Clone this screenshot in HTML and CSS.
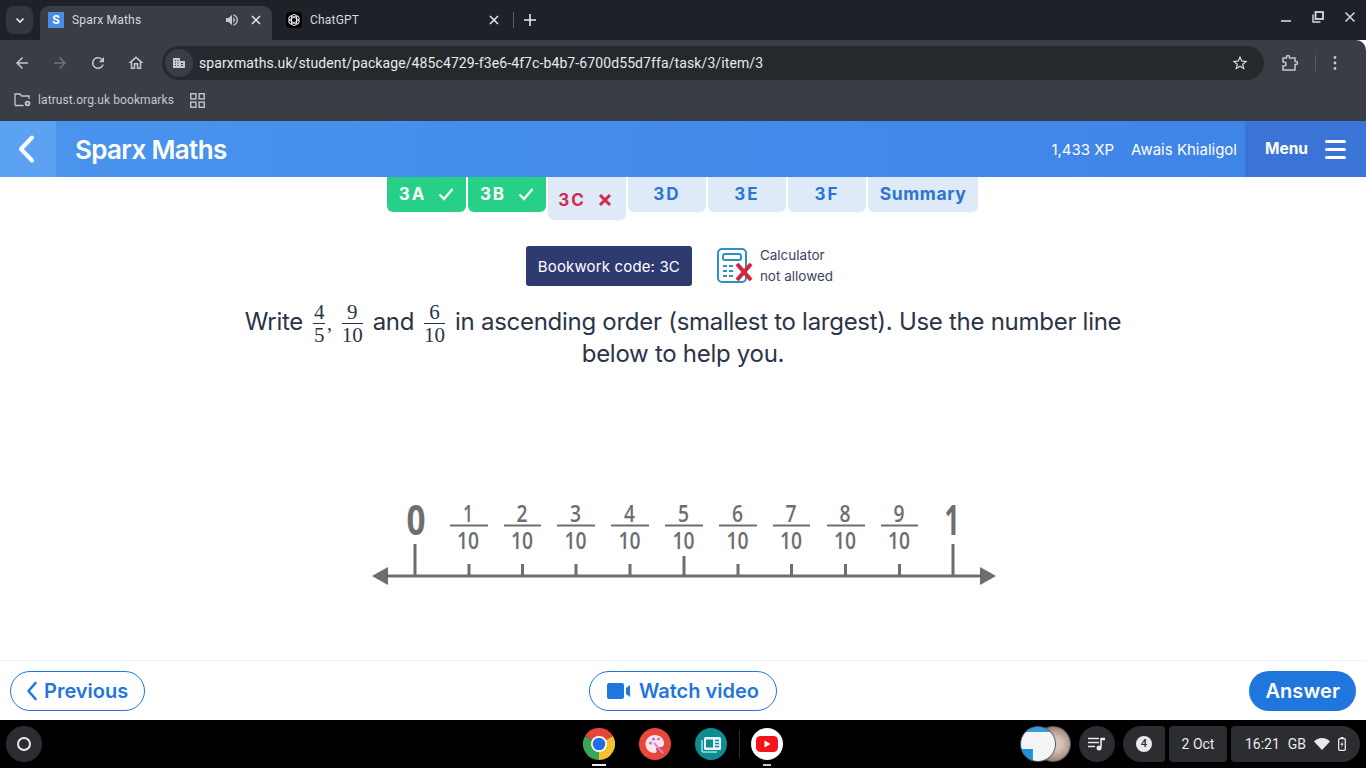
FILE: index.html
```html
<!DOCTYPE html>
<html lang="en">
  <head>
    <meta charset="UTF-8" />
    <meta name="viewport" content="width=device-width, initial-scale=1.0" />
    <title>Sparx Maths</title>
    <link rel="stylesheet" href="styles.css">
  </head>
  <body>
    <!-- Browser Tabs -->
    <div class="tab-strip">
      <div class="tab-search">
        <svg viewBox="0 0 12 12" width="12" height="12"><path d="M2.5 4.5L6 8l3.5-3.5" fill="none" stroke="#e8eaed" stroke-width="1.7"/></svg>
      </div>
      <div class="tab tab-active">
        <span class="tab-favicon">S</span>
        <span class="tab-title">Sparx Maths</span>
        <svg class="tab-sound" viewBox="0 0 24 24" width="16" height="16"><path d="M3 9v6h4l5 5V4L7 9H3zm11 -1.030v8.050c1.480-.73 2.500-2.250 2.500-4.020S15.480 8.700 14 7.970zM14 3.230v2.060c2.890.86 5 3.540 5 6.710s-2.110 5.850-5 6.710v2.060c4.010-.91 7-4.490 7-8.770s-2.990-7.860-7-8.770z" fill="#c4c7cc"/></svg>
        <svg class="tab-close" viewBox="0 0 10 10" width="10" height="10"><path d="M1 1l8 8M9 1l-8 8" stroke="#e8eaed" stroke-width="1.5"/></svg>
      </div>
      <div class="tab tab-other">
        <span class="gpt-favicon">
          <svg viewBox="0 0 16 16" width="16" height="16">
            <g fill="none" stroke="#e8eaed" stroke-width="1">
              <rect x="5.5" y="2.5" width="5" height="11" rx="2.5"/>
              <rect x="5.5" y="2.5" width="5" height="11" rx="2.5" transform="rotate(60 8 8)"/>
              <rect x="5.5" y="2.5" width="5" height="11" rx="2.5" transform="rotate(120 8 8)"/>
            </g>
          </svg>
        </span>
        <span class="tab-title">ChatGPT</span>
        <svg class="tab-close" viewBox="0 0 10 10" width="10" height="10"><path d="M1 1l8 8M9 1l-8 8" stroke="#e8eaed" stroke-width="1.5"/></svg>
      </div>
      <div class="tab-sep"></div>
      <svg class="tab-new" viewBox="0 0 12 12" width="12" height="12"><path d="M6 0v12M0 6h12" stroke="#e8eaed" stroke-width="1.6"/></svg>
      <div class="window-controls">
        <svg viewBox="0 0 12 12" width="12" height="12"><path d="M1 10h10" stroke="#d5d8de" stroke-width="1.6"/></svg>
        <svg viewBox="0 0 12 12" width="12" height="12"><path d="M1 3.500v7.500h7.500" fill="none" stroke="#d5d8de" stroke-width="1.4"/><rect x="3.500" y="1" width="7.500" height="7" fill="none" stroke="#d5d8de" stroke-width="1.8"/></svg>
        <svg viewBox="0 0 12 12" width="12" height="12"><path d="M1.500 1.500l9 9M10.500 1.500l-9 9" stroke="#d5d8de" stroke-width="1.5"/></svg>
      </div>
    </div>

    <!-- Toolbar -->
    <div class="toolbar">
      <div class="nav-icons">
        <svg viewBox="0 0 24 24" width="18" height="18"><path d="M20 11H7.830l5.590-5.590L12 4l-8 8 8 8 1.410-1.410L7.830 13H20z" fill="#c4c7cc"/></svg>
        <svg viewBox="0 0 24 24" width="18" height="18"><path d="M12 4l-1.410 1.410L16.170 11H4v2h12.170l-5.580 5.590L12 20l8-8z" fill="#6f7278"/></svg>
        <svg viewBox="0 0 24 24" width="18" height="18"><path d="M17.650 6.350A7.958 7.958 0 0 0 12 4c-4.420 0-7.990 3.580-7.990 8s3.570 8 7.990 8c3.730 0 6.840-2.550 7.730-6h-2.080A5.990 5.990 0 0 1 12 18c-3.310 0-6-2.690-6-6s2.690-6 6-6c1.660 0 3.140.69 4.220 1.780L13 11h7V4l-2.350 2.350z" fill="#c4c7cc"/></svg>
        <svg viewBox="0 0 24 24" width="18" height="18"><path d="M12 5.690l5 4.500V18h-2v-6H9v6H7v-7.810l5-4.500M12 3L2 12h3v8h6v-6h2v6h6v-8h3L12 3z" fill="#c4c7cc"/></svg>
      </div>
      <div class="omnibox">
        <span class="site-icon">
          <svg viewBox="0 0 14 14" width="14" height="14"><path d="M1 2h7v3h5v7H1z" fill="#c4c7cc"/><path d="M3 4h1v1H3zM5.500 4h1v1h-1zM3 6.500h1v1H3zM5.500 6.500h1v1h-1zM3 9h1v1H3zM5.500 9h1v1h-1zM9 7h2v1H9zM9 9h2v1H9z" fill="#33363b"/></svg>
        </span>
        <span class="url">sparxmaths.uk/student/package/485c4729-f3e6-4f7c-b4b7-6700d55d7ffa/task/3/item/3</span>
        <svg class="star" viewBox="0 0 24 24" width="18" height="18"><path d="M22 9.240l-7.190-.62L12 2 9.190 8.630 2 9.240l5.460 4.730L5.820 21 12 17.270 18.180 21l-1.630-7.030L22 9.240zM12 15.400l-3.760 2.270 1-4.280-3.320-2.880 4.380-.38L12 6.100l1.710 4.040 4.380.38-3.320 2.880 1 4.280L12 15.400z" fill="#d5d8de"/></svg>
      </div>
      <svg class="ext-icon" viewBox="0 0 18 18" width="18" height="18"><path d="M2 4h3.500V3a1.500 1.500 0 0 1 3 0v1H14v3.500h1a1.500 1.500 0 0 1 0 3h-1V16H2v-4h1a2 2 0 0 0 0-4H2z" fill="none" stroke="#c4c7cc" stroke-width="1.500"/></svg>
      <div class="toolbar-sep"></div>
      <svg class="dots" viewBox="0 0 4 16" width="4" height="16"><circle cx="2" cy="2.500" r="1.400" fill="#c4c7cc"/><circle cx="2" cy="8" r="1.400" fill="#c4c7cc"/><circle cx="2" cy="13.500" r="1.400" fill="#c4c7cc"/></svg>
    </div>

    <!-- Bookmarks -->
    <div class="bookmarks">
      <svg viewBox="0 0 18 16" width="18" height="16"><path d="M1 13.500V2h5l1.500 2h7.500v3M9.500 13.500H1" fill="none" stroke="#c4c7cc" stroke-width="1.300"/><circle cx="13.500" cy="11.500" r="2.800" fill="#c4c7cc"/><circle cx="13.500" cy="11.500" r="1" fill="#3a3d44"/></svg>
      <span class="bookmark-label">latrust.org.uk bookmarks</span>
      <svg class="apps-icon" viewBox="0 0 14 14" width="15" height="15"><g fill="none" stroke="#c4c7cc" stroke-width="1.300"><rect x=".7" y=".7" width="4.800" height="4.800"/><rect x="8.500" y=".7" width="4.800" height="4.800"/><rect x=".7" y="8.500" width="4.800" height="4.800"/><rect x="8.500" y="8.500" width="4.800" height="4.800"/></g></svg>
    </div>

    <!-- Sparx Header -->
    <header class="app-header">
      <div class="back-btn">
        <svg viewBox="0 0 18 28" width="18" height="28"><path d="M15 2.500L4 14l11 11.500" fill="none" stroke="#fff" stroke-width="4" stroke-linecap="round" stroke-linejoin="round"/></svg>
      </div>
      <div class="app-title">Sparx Maths</div>
      <div class="user-info">
        <span>1,433 XP</span>
        <span>Awais Khialigol</span>
      </div>
      <div class="menu-btn">
        <span>Menu</span>
        <div class="burger"><i></i><i></i><i></i></div>
      </div>
    </header>

    <!-- Main Content -->
    <main class="main-content">
      <nav class="task-tabs">
        <div class="task-tab tab-done tab-first">3A
          <svg viewBox="0 0 16 14" width="16" height="14"><path d="M1.500 7.500l4.500 4.500 8.500-10" fill="none" stroke="#fff" stroke-width="2.300"/></svg>
        </div>
        <div class="task-tab tab-done">3B
          <svg viewBox="0 0 16 14" width="16" height="14"><path d="M1.500 7.500l4.500 4.500 8.500-10" fill="none" stroke="#fff" stroke-width="2.300"/></svg>
        </div>
        <div class="task-tab tab-wrong">3C
          <svg viewBox="0 0 14 14" width="14" height="14"><path d="M2 2l10 10M12 2L2 12" stroke="#cf2a4d" stroke-width="3"/></svg>
        </div>
        <div class="task-tab">3D</div>
        <div class="task-tab">3E</div>
        <div class="task-tab">3F</div>
        <div class="task-tab tab-summary">Summary</div>
      </nav>

      <div class="info-row">
        <div class="bookwork">Bookwork code: 3C</div>
        <div class="calc-note">
          <svg viewBox="0 0 38 36" width="38" height="36">
            <rect x="1" y="1" width="28" height="33" rx="4" fill="#fff" stroke="#2f8fc0" stroke-width="2"/>
            <rect x="6" y="6" width="18" height="6" rx="2" fill="none" stroke="#2f8fc0" stroke-width="2"/>
            <path d="M6 18h4M12 18h4M6 23h4M12 23h4M6 28h4M12 28h4" stroke="#2f8fc0" stroke-width="2"/>
            <path d="M20 16l14 16M34 16L20 32" stroke="#d3233f" stroke-width="4"/>
          </svg>
          <div class="calc-text">Calculator<br>not allowed</div>
        </div>
      </div>

      <p class="question">
        Write
        <span class="frac"><span>4</span><span>5</span></span><span class="comma">,</span>
        <span class="frac"><span>9</span><span>10</span></span>
        and
        <span class="frac"><span>6</span><span>10</span></span>
        in ascending order (smallest to largest). Use the number line below to help you.
      </p>

      <!-- Number line image -->
      <svg class="number-line" viewBox="0 -20 630 110" width="630" height="110">
        <g stroke="#6d6e71" stroke-width="3">
          <path d="M14 75h596"/>
          <path d="M43 43v32M581 43v32M312 55v20"/>
          <path d="M97 63v12M150.500 63v12M204 63v12M258 63v12M366 63v12M419.500 63v12M473.500 63v12M527.500 63v12"/>
        </g>
        <path d="M0 75l16-9v18zM624 75l-16-9v18z" fill="#6d6e71"/>
        <g class="nl-big">
          <text x="44" y="34" textLength="19" lengthAdjust="spacingAndGlyphs">0</text>
          <text x="580" y="34" textLength="15" lengthAdjust="spacingAndGlyphs">1</text>
        </g>
        <g class="nl-num">
          <text x="96" y="21" textLength="10" lengthAdjust="spacingAndGlyphs">1</text><text x="96" y="48" textLength="22" lengthAdjust="spacingAndGlyphs">10</text>
          <text x="150" y="21" textLength="11" lengthAdjust="spacingAndGlyphs">2</text><text x="150" y="48" textLength="22" lengthAdjust="spacingAndGlyphs">10</text>
          <text x="203.500" y="21" textLength="11" lengthAdjust="spacingAndGlyphs">3</text><text x="203.500" y="48" textLength="22" lengthAdjust="spacingAndGlyphs">10</text>
          <text x="257.500" y="21" textLength="11" lengthAdjust="spacingAndGlyphs">4</text><text x="257.500" y="48" textLength="22" lengthAdjust="spacingAndGlyphs">10</text>
          <text x="311.500" y="21" textLength="11" lengthAdjust="spacingAndGlyphs">5</text><text x="311.500" y="48" textLength="22" lengthAdjust="spacingAndGlyphs">10</text>
          <text x="365.500" y="21" textLength="11" lengthAdjust="spacingAndGlyphs">6</text><text x="365.500" y="48" textLength="22" lengthAdjust="spacingAndGlyphs">10</text>
          <text x="419" y="21" textLength="11" lengthAdjust="spacingAndGlyphs">7</text><text x="419" y="48" textLength="22" lengthAdjust="spacingAndGlyphs">10</text>
          <text x="473" y="21" textLength="11" lengthAdjust="spacingAndGlyphs">8</text><text x="473" y="48" textLength="22" lengthAdjust="spacingAndGlyphs">10</text>
          <text x="527" y="21" textLength="11" lengthAdjust="spacingAndGlyphs">9</text><text x="527" y="48" textLength="22" lengthAdjust="spacingAndGlyphs">10</text>
        </g>
        <path d="M78 24.500h38M132 24.500h37M185 24.500h38M239 24.500h38M293 24.500h38M347 24.500h38M401 24.500h37M455 24.500h38M509 24.500h37" stroke="#6d6e71" stroke-width="2"/>
      </svg>
    </main>

    <!-- Footer Buttons -->
    <footer class="app-footer">
      <div class="footer-left">
        <a href="#" class="btn btn-outline btn-prev">
          <svg viewBox="0 0 12 20" width="12" height="20"><path d="M9.500 2L2.500 10l7 8" fill="none" stroke="#1f76dc" stroke-width="2.600" stroke-linecap="round" stroke-linejoin="round"/></svg>
          Previous
        </a>
      </div>
      <a href="#" class="btn btn-outline btn-video">
        <svg viewBox="0 0 24 18" width="24" height="18"><path d="M2 1h13a2 2 0 0 1 2 2v12a2 2 0 0 1-2 2H2a2 2 0 0 1-2-2V3a2 2 0 0 1 2-2zM19 6l4-3v12l-4-3z" fill="#1f76dc"/></svg>
        Watch video
      </a>
      <div class="footer-right">
        <a href="#" class="btn btn-solid">Answer</a>
      </div>
    </footer>

    <!-- ChromeOS Shelf -->
    <div class="shelf">
      <div class="shelf-left">
        <div class="launcher"><i></i></div>
      </div>
      <div class="shelf-apps">
        <div class="app-icon app-open-wide">
          <svg viewBox="0 0 32 32" width="32" height="32">
            <path d="M2.140 8A16 16 0 0 1 29.860 8L16 16z" fill="#e5453a"/>
            <path d="M29.860 8A16 16 0 0 1 16 32L16 16z" fill="#f7c12e"/>
            <path d="M16 32A16 16 0 0 1 2.140 8L16 16z" fill="#3aa655"/>
            <circle cx="16" cy="16" r="8" fill="#fff"/>
            <circle cx="16" cy="16" r="6.300" fill="#1f6fe0"/>
          </svg>
        </div>
        <div class="app-icon">
          <svg viewBox="0 0 32 32" width="32" height="32">
            <circle cx="16" cy="16" r="16" fill="#e8473b"/>
            <path d="M16 7c-5.500 0-9.500 4-9.500 9s4 9 9 9c2 0 2.500-1.500 1.800-3-.8-1.700.3-3 2-3h2.700c1.800 0 3-1.300 3-3.500C25 10.500 21 7 16 7z" fill="#fbe4ee"/>
            <circle cx="11.500" cy="15" r="1.600" fill="#e06fb0"/>
            <circle cx="14.500" cy="11" r="1.600" fill="#b56fe0"/>
            <circle cx="19.500" cy="11" r="1.600" fill="#e06fb0"/>
            <path d="M15 15l9 10" stroke="#c58be8" stroke-width="2"/>
          </svg>
        </div>
        <div class="app-icon">
          <svg viewBox="0 0 32 32" width="32" height="32">
            <circle cx="16" cy="16" r="16" fill="#0f8b92"/>
            <path d="M7 12v11a1 1 0 0 0 1 1h14" fill="none" stroke="#9fdfe6" stroke-width="1.500"/>
            <rect x="9" y="9" width="17" height="13" rx="1.500" fill="#e6f6f8"/>
            <rect x="11" y="11.500" width="7" height="8" fill="#0f8b92"/>
            <path d="M20 12.500h4M20 15.500h4M20 18.500h4" stroke="#0f8b92" stroke-width="1.500"/>
          </svg>
        </div>
        <div class="shelf-sep"></div>
        <div class="app-icon app-open-small">
          <svg viewBox="0 0 32 32" width="32" height="32">
            <circle cx="16" cy="16" r="16" fill="#fff"/>
            <rect x="5" y="8" width="22" height="16" rx="4.500" fill="#f5141c"/>
            <path d="M13.500 12.500v7l6-3.500z" fill="#fff"/>
          </svg>
        </div>
      </div>
      <div class="shelf-right">
        <div class="capture-pods">
          <div class="pod pod-back"></div>
          <div class="pod pod-front"></div>
        </div>
        <div class="status-round">
          <svg viewBox="0 0 18 14" width="18" height="14"><path d="M0 1.500h11M0 5.500h11M0 9.500h7" stroke="#e8eaed" stroke-width="1.500"/><path d="M13 1v9.500" stroke="#e8eaed" stroke-width="1.600"/><path d="M13 .7h4v2.600h-4z" fill="#e8eaed"/><circle cx="11" cy="11" r="2.500" fill="#e8eaed"/></svg>
        </div>
        <div class="status-pill pill-notify"><span class="notify-count">4</span></div>
        <div class="status-pill pill-date">2 Oct</div>
        <div class="status-pill pill-time">
          <span>16:21</span>
          <span>GB</span>
          <svg viewBox="0 0 16 12" width="16" height="12"><path d="M8 12L0 3.500C2 1.300 4.800 0 8 0s6 1.300 8 3.500z" fill="#e8eaed"/></svg>
          <svg viewBox="0 0 8 14" width="8" height="14"><rect x=".7" y="1.700" width="6.600" height="11.600" rx="1" fill="none" stroke="#e8eaed" stroke-width="1.300"/><path d="M2.500 0h3v1.500h-3zM4.700 3.500L2.500 8h1.500l-.7 3 2.200-4.500H4z" fill="#e8eaed"/></svg>
        </div>
      </div>
    </div>
  </body>
</html>
```

FILE: styles.css
```css
* {
  margin: 0;
  padding: 0;
  box-sizing: border-box;
}

body {
  width: 1366px;
  height: 768px;
  overflow: hidden;
  display: flex;
  flex-direction: column;
  background-color: #fff;
  font-family: Inter, "Open Sans", sans-serif;
  color: #2b3447;
}

/* Browser Tabs */
.tab-strip {
  height: 40px;
  flex-shrink: 0;
  display: flex;
  align-items: flex-end;
  background-color: #1e2127;
  font-family: Roboto, sans-serif;
  font-size: 12px;
  color: #d5d8de;
}

.tab-search {
  width: 27px;
  height: 28px;
  margin: 0 7px 6px 6px;
  border-radius: 8px;
  background-color: #33363c;
  display: flex;
  align-items: center;
  justify-content: center;
}

.tab {
  width: 233px;
  height: 34px;
  padding: 0 11px 6px 13px;
  display: flex;
  align-items: center;
  gap: 8px;
  border-radius: 9px 9px 0 0;
}

.tab-active {
  background-color: #3a3d44;
  width: 232px;
  padding-left: 8px;
}

.tab-other {
  padding: 0 6px 6px 14px;
}

.tab-favicon {
  width: 16px;
  height: 16px;
  background-color: #4a8be8;
  color: #fff;
  font-weight: 700;
  font-size: 12px;
  text-align: center;
  line-height: 16px;
}

.gpt-favicon {
  width: 16px;
  height: 16px;
  border-radius: 4px;
  background-color: #000;
  display: flex;
}

.tab-title {
  flex: 1;
  letter-spacing: 0.2px;
}

.tab-sound {
  margin-right: 3px;
}

.tab-sep {
  width: 1px;
  height: 16px;
  background-color: #5a5d63;
  margin: 0 10px 12px 8px;
}

.tab-new {
  margin: 0 0 14px 0;
}

.window-controls {
  margin-left: auto;
  padding: 0 10px 17px 0;
  display: flex;
  gap: 20px;
}

/* Toolbar */
.toolbar {
  height: 44px;
  flex-shrink: 0;
  display: flex;
  align-items: center;
  background-color: #3a3d44;
  border-radius: 0 10px 0 0;
  padding-top: 2px;
}

.nav-icons {
  display: flex;
  gap: 20px;
  padding-left: 13px;
}

.omnibox {
  width: 1102px;
  height: 34px;
  margin-left: 17px;
  padding: 0 15px 0 3px;
  border-radius: 17px;
  background-color: #25282d;
  display: flex;
  align-items: center;
  font-family: Roboto, sans-serif;
  font-size: 14px;
  letter-spacing: 0.1px;
  color: #e8eaed;
}

.site-icon {
  width: 28px;
  height: 28px;
  border-radius: 50%;
  background-color: #3a3d44;
  display: flex;
  align-items: center;
  justify-content: center;
  margin-right: 6px;
}

.url {
  flex: 1;
}

.ext-icon {
  margin-left: 17px;
}

.toolbar-sep {
  width: 1px;
  height: 16px;
  background-color: #5a5d63;
  margin: 0 17px 0 16px;
}

/* Bookmarks */
.bookmarks {
  height: 37px;
  flex-shrink: 0;
  display: flex;
  align-items: center;
  padding: 0 0 5px 14px;
  background-color: #3a3d44;
  font-family: Roboto, sans-serif;
  font-size: 12px;
  letter-spacing: 0.1px;
  color: #c4c7cc;
}

.bookmark-label {
  margin-left: 6px;
}

.apps-icon {
  margin-left: 16px;
}

/* Sparx Header */
.app-header {
  height: 56px;
  flex-shrink: 0;
  display: flex;
  align-items: center;
  background: linear-gradient(to right, #4a94ee, #3e82e6);
  color: #fff;
}

.back-btn {
  width: 56px;
  height: 100%;
  background-color: #5ca2f2;
  display: flex;
  align-items: center;
  justify-content: center;
  padding-right: 4px;
}

.app-title {
  flex: 1;
  margin-left: 19px;
  font-size: 26px;
  font-weight: 600;
  letter-spacing: -0.65px;
}

.user-info {
  display: flex;
  gap: 17px;
  font-size: 15px;
  padding-right: 8px;
}

.menu-btn {
  width: 121px;
  height: 100%;
  padding: 0 20px;
  background-color: #3974d6;
  display: flex;
  align-items: center;
  justify-content: space-between;
  font-size: 15.500px;
  font-weight: 700;
}

.menu-btn span {
  padding-bottom: 2px;
}

.burger {
  width: 21px;
  display: flex;
  flex-direction: column;
  gap: 5px;
}

.burger i {
  display: block;
  height: 3px;
  border-radius: 2px;
  background-color: #fff;
}

/* Main Content */
.main-content {
  flex: 1;
  display: flex;
  flex-direction: column;
  align-items: center;
}

.task-tabs {
  display: flex;
  align-items: flex-start;
  gap: 2px;
  height: 43px;
  margin-right: 1px;
}

.task-tab {
  width: 78px;
  height: 35px;
  padding-bottom: 2px;
  border-radius: 0 0 6px 6px;
  background-color: #deeaf7;
  color: #2a76d2;
  font-size: 17px;
  font-weight: 700;
  letter-spacing: 2px;
  display: flex;
  align-items: center;
  justify-content: center;
  gap: 12px;
}

.tab-done {
  background-color: #26d086;
  color: #fff;
}

.tab-first {
  width: 79px;
}

.tab-wrong {
  height: 43px;
  color: #cf2a4d;
  padding: 3px 4px 0 0;
}

.tab-summary {
  width: 110px;
  font-size: 17.500px;
  letter-spacing: 0.6px;
}

.info-row {
  display: flex;
  align-items: center;
  margin: 25px 7px 0 0;
  gap: 25px;
}

.bookwork {
  width: 166px;
  height: 40px;
  border-radius: 3px;
  background-color: #2e3a70;
  color: #fff;
  font-size: 15px;
  letter-spacing: 0.15px;
  display: flex;
  align-items: center;
  justify-content: center;
}

.calc-note {
  display: flex;
  align-items: center;
  gap: 5px;
}

.calc-text {
  font-size: 13.500px;
  line-height: 21px;
  color: #3b4466;
}

.question {
  width: 900px;
  margin-top: 19px;
  font-size: 24px;
  letter-spacing: -0.28px;
  line-height: 32px;
  text-align: center;
}

.frac {
  display: inline-flex;
  flex-direction: column;
  vertical-align: middle;
  margin: -10px 3.500px;
  font-family: "Liberation Serif", serif;
  font-size: 21px;
  letter-spacing: 0;
  line-height: 22px;
  text-align: center;
}

.frac span:first-child {
  border-bottom: 1px solid #2b3447;
  padding: 0 1px;
}

.comma {
  font-family: "Liberation Serif", serif;
  font-size: 20px;
  line-height: 1;
  margin-left: -2px;
}

.number-line {
  margin: 111px 0 0 8px;
}

.number-line text {
  text-anchor: middle;
  fill: #6d6e71;
  font-family: "Open Sans", sans-serif;
}

.nl-big text {
  font-size: 42px;
  font-weight: 700;
}

.nl-num text {
  font-size: 24px;
  font-weight: 600;
}

/* Footer Buttons */
.app-footer {
  height: 60px;
  flex-shrink: 0;
  padding: 0 10px;
  display: grid;
  grid-template-columns: 1fr auto 1fr;
  align-items: center;
  border-top: 1px solid #eef1f8;
}

.footer-right {
  display: flex;
  justify-content: flex-end;
}

.footer-left {
  display: flex;
}

.btn {
  height: 40px;
  padding: 1px 16px 0;
  border-radius: 20px;
  display: inline-flex;
  align-items: center;
  gap: 6px;
  text-decoration: none;
  font-size: 20px;
  font-weight: 600;
}

.btn-outline {
  border: 1px solid #1f76dc;
  color: #1f76dc;
}

.btn-prev {
  padding: 1px 16px 0 15px;
}

.btn-video {
  gap: 8px;
  padding: 1px 17px 0;
}

.btn-solid {
  background-color: #1f76dc;
  color: #fff;
  letter-spacing: 0.1px;
}

/* ChromeOS Shelf */
.shelf {
  height: 48px;
  flex-shrink: 0;
  display: grid;
  grid-template-columns: 1fr auto 1fr;
  align-items: center;
  background-color: #000;
  font-family: Roboto, sans-serif;
  font-size: 14px;
  color: #e8eaed;
}

.shelf-left {
  padding-left: 6px;
}

.launcher {
  width: 36px;
  height: 36px;
  border-radius: 50%;
  background-color: #2c2d30;
  display: flex;
  align-items: center;
  justify-content: center;
}

.launcher i {
  width: 14px;
  height: 14px;
  border: 2px solid #e8eaed;
  border-radius: 50%;
}

.shelf-apps {
  display: flex;
  align-items: center;
  gap: 24px;
}

.app-icon {
  position: relative;
  width: 32px;
  height: 32px;
}

.app-open-wide::after,
.app-open-small::after {
  content: "";
  position: absolute;
  top: 36px;
  left: 9px;
  width: 14px;
  height: 2px;
  background-color: #e8eaed;
}

.app-open-small::after {
  left: 12px;
  width: 8px;
  background-color: #c4c7cc;
}

.shelf-sep {
  width: 1px;
  height: 28px;
  margin: 0 -12.500px;
  background-color: #2c2d30;
}

.shelf-right {
  display: flex;
  justify-content: flex-end;
  align-items: center;
  gap: 4px;
  padding-right: 6px;
}

.capture-pods {
  position: relative;
  width: 51px;
  height: 36px;
  margin-right: 4px;
}

.pod {
  position: absolute;
  top: 0;
  width: 36px;
  height: 36px;
  border-radius: 50%;
  border: 1px solid #55585e;
}

.pod-back {
  right: 0;
  background: radial-gradient(circle at 60% 50%, #d8c4b8 20%, #8a6d60 80%);
}

.pod-front {
  left: 0;
  background: linear-gradient(#1f8fe0, #1f8fe0) left bottom / 35% 35% no-repeat, linear-gradient(to bottom, #3a9bdc 0 14%, #f2f4f6 14%);
}

.status-round {
  width: 36px;
  height: 36px;
  border-radius: 50%;
  background-color: #2c2d30;
  display: flex;
  align-items: center;
  justify-content: center;
}

.status-pill {
  height: 36px;
  background-color: #2c2d30;
  display: flex;
  align-items: center;
  justify-content: center;
}

.pill-notify {
  width: 42px;
  margin-left: 4px;
  border-radius: 18px 4px 4px 18px;
}

.notify-count {
  width: 16px;
  height: 16px;
  border-radius: 50%;
  background-color: #e8eaed;
  color: #2c2d30;
  font-size: 11px;
  font-weight: 500;
  text-align: center;
  line-height: 16px;
}

.pill-date {
  width: 58px;
  border-radius: 4px;
}

.pill-time {
  width: 129px;
  gap: 8px;
  border-radius: 4px 18px 18px 4px;
}
```
